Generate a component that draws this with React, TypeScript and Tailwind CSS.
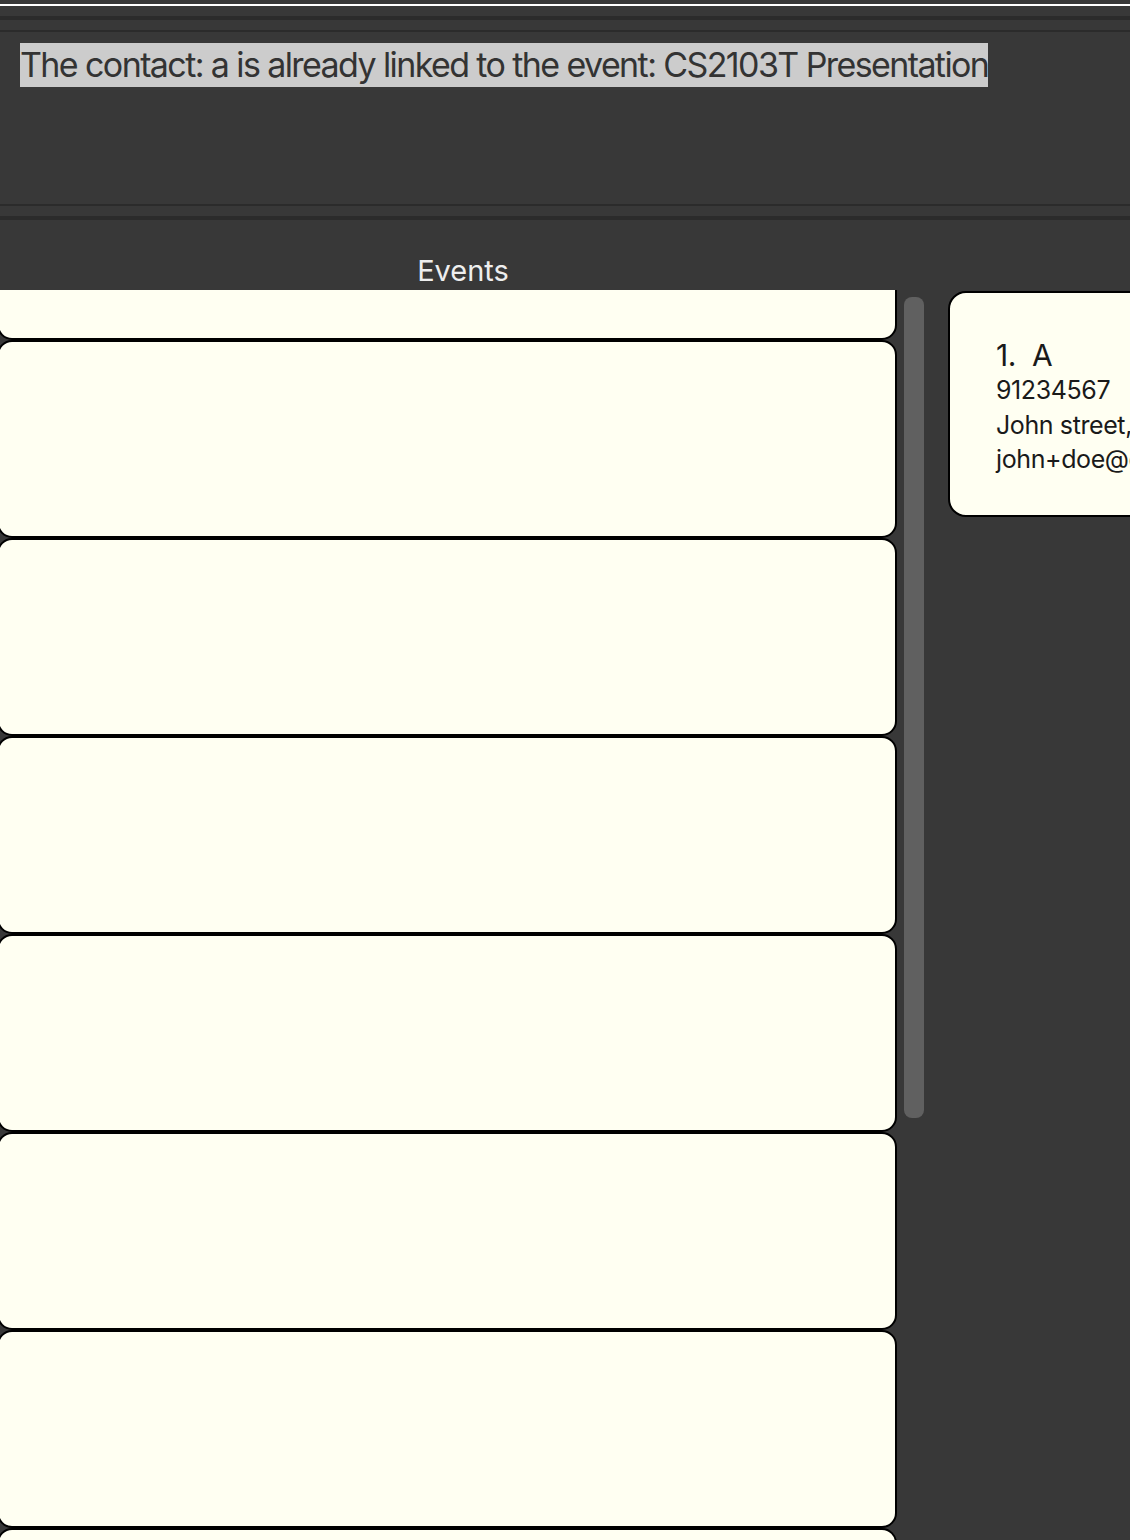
import React from "react";

const font = { fontFamily: "Inter, 'Noto Sans', sans-serif" };

function EventCard() {
  return (
    <div className="h-[198px] shrink-0 rounded-[15px] border-2 border-black bg-[#fffff2]" />
  );
}

export default function App() {
  return (
    <div
      className="relative h-[1540px] w-[1130px] overflow-hidden bg-[#383838] flex flex-col"
      style={font}
    >
      {/* top bars */}
      <div className="h-[4px] shrink-0" />
      <div className="h-[2px] shrink-0 bg-white" />
      <div className="h-[10px] shrink-0" />
      <div className="h-[4px] shrink-0 bg-[#2b2b2b]" />
      <div className="h-[10px] shrink-0" />
      <div className="h-[2px] shrink-0 bg-[#2b2b2b]" />

      {/* result display */}
      <div className="h-[172px] shrink-0 pl-[20px] pt-[11px]">
        <span className="inline-block h-[44px] bg-[#cccccc] text-[34px] leading-[44px] tracking-[-1.6px] text-[#333333] whitespace-nowrap">
          The contact: a is already linked to the event: CS2103T Presentation
        </span>
      </div>

      <div className="h-[2px] shrink-0 bg-[#2b2b2b]" />
      <div className="h-[10px] shrink-0" />
      <div className="h-[4px] shrink-0 bg-[#2b2b2b]" />

      {/* main */}
      <div className="flex flex-1 min-h-0">
        <div className="flex w-[926px] shrink-0 flex-col">
          <div className="flex h-[70px] shrink-0 items-end justify-center text-[29px] leading-[38px] text-[#eeeeee]">
            Events
          </div>
          <div className="flex flex-1 min-h-0 overflow-hidden">
            <div className="-ml-[3px] flex w-[900px] shrink-0 flex-col overflow-hidden">
              <div className="-mt-[148px] flex flex-col">
                <EventCard />
                <EventCard />
                <EventCard />
                <EventCard />
                <EventCard />
                <EventCard />
                <EventCard />
                <EventCard />
              </div>
            </div>
            <div className="ml-[7px] mt-[7px] h-[821px] w-[20px] rounded-[8px] bg-[#606060]" />
          </div>
        </div>

        <div className="ml-[22px] mt-[71px] flex-1 min-w-0 overflow-hidden">
          <div className="h-[226px] w-[420px] rounded-[18px] border-2 border-black bg-[#fffff2] pl-[46px] pt-[44px] text-[#1a1a1a] tracking-[-0.4px]">
            <div className="text-[30px] leading-[36px] whitespace-nowrap">1.&nbsp;&nbsp;A</div>
            <div className="text-[25px] leading-[35px] whitespace-nowrap">91234567</div>
            <div className="text-[25px] leading-[34px] whitespace-nowrap">John street, block 123, #01-01</div>
            <div className="text-[25px] leading-[34px] whitespace-nowrap">john+doe@example.com</div>
          </div>
        </div>
      </div>
    </div>
  );
}
